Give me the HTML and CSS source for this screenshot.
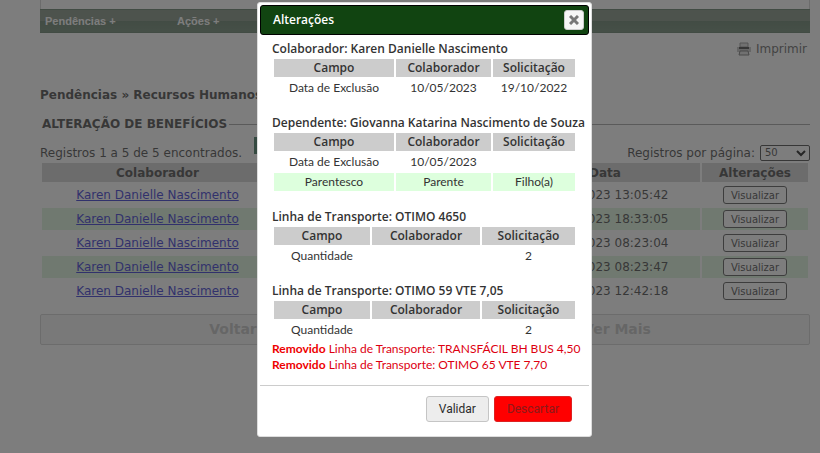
FILE: index.html
```
<!DOCTYPE html>
<html lang="pt-br">
<head>
    <meta charset="UTF-8">
    <title>Pendências - Recursos Humanos</title>
    <link rel="stylesheet" href="styles.css">
</head>
<body>
    <div class="page">
        <div class="header"></div>
        <nav class="menu">
            <a href="#">Pendências +</a>
            <a href="#">Ações +</a>
        </nav>

        <div class="tools">
            <a href="#" class="print">
                <svg width="16" height="14" viewBox="0 0 16 14">
                    <path d="M4 1h8v4H4z" fill="#ddd" stroke="#888"/>
                    <path d="M1 5h14v5H1z" fill="#bbb"/>
                    <path d="M3 5h10v2H3z" fill="#333"/>
                    <path d="M4 9h8l1 4H3z" fill="#ddd" stroke="#666"/>
                </svg>
                Imprimir
            </a>
        </div>

        <h1>Pendências » Recursos Humanos</h1>

        <h2><span>ALTERAÇÃO DE BENEFÍCIOS</span></h2>

        <div class="pager">
            <span>Registros 1 a 5 de 5 encontrados.</span>
            <span class="page-mark"></span>
            <label for="perPage">Registros por página:</label>
            <div class="select-box">
                <select id="perPage">
                    <option>50</option>
                </select>
                <svg width="10" height="7" viewBox="0 0 10 7">
                    <path d="M1 1l4 4 4-4" fill="none" stroke="#000" stroke-width="2"/>
                </svg>
            </div>
        </div>

        <table class="records">
            <thead>
                <tr>
                    <th class="col-name">Colaborador</th>
                    <th></th>
                    <th class="col-date">Data</th>
                    <th class="col-action">Alterações</th>
                </tr>
            </thead>
            <tbody>
                <tr>
                    <td><a href="#">Karen Danielle Nascimento</a></td>
                    <td></td>
                    <td>10/05/2023 13:05:42</td>
                    <td><button type="button">Visualizar</button></td>
                </tr>
                <tr>
                    <td><a href="#">Karen Danielle Nascimento</a></td>
                    <td></td>
                    <td>10/05/2023 18:33:05</td>
                    <td><button type="button">Visualizar</button></td>
                </tr>
                <tr>
                    <td><a href="#">Karen Danielle Nascimento</a></td>
                    <td></td>
                    <td>10/05/2023 08:23:04</td>
                    <td><button type="button">Visualizar</button></td>
                </tr>
                <tr>
                    <td><a href="#">Karen Danielle Nascimento</a></td>
                    <td></td>
                    <td>10/05/2023 08:23:47</td>
                    <td><button type="button">Visualizar</button></td>
                </tr>
                <tr>
                    <td><a href="#">Karen Danielle Nascimento</a></td>
                    <td></td>
                    <td>10/05/2023 12:42:18</td>
                    <td><button type="button">Visualizar</button></td>
                </tr>
            </tbody>
        </table>

        <div class="actions">
            <a href="#">Voltar</a>
            <a href="#">Ver Mais</a>
        </div>
    </div>

    <div class="overlay">
        <div class="dialog" role="dialog" aria-labelledby="dialogTitle">
            <div class="dialog-title">
                <span id="dialogTitle">Alterações</span>
                <button type="button" class="close" aria-label="Fechar">
                    <svg width="10" height="10" viewBox="0 0 10 10">
                        <path d="M1 1l8 8M9 1l-8 8" stroke="#777" stroke-width="3"/>
                    </svg>
                </button>
            </div>

            <div class="dialog-content">
                <h3>Colaborador: Karen Danielle Nascimento</h3>
                <table class="changes">
                    <tr><th>Campo</th><th>Colaborador</th><th>Solicitação</th></tr>
                    <tr><td>Data de Exclusão</td><td>10/05/2023</td><td>19/10/2022</td></tr>
                </table>

                <h3>Dependente: Giovanna Katarina Nascimento de Souza</h3>
                <table class="changes">
                    <tr><th>Campo</th><th>Colaborador</th><th>Solicitação</th></tr>
                    <tr><td>Data de Exclusão</td><td>10/05/2023</td><td></td></tr>
                    <tr class="odd"><td>Parentesco</td><td>Parente</td><td>Filho(a)</td></tr>
                </table>

                <h3>Linha de Transporte: OTIMO 4650</h3>
                <table class="changes transport">
                    <tr><th>Campo</th><th>Colaborador</th><th>Solicitação</th></tr>
                    <tr><td>Quantidade</td><td></td><td>2</td></tr>
                </table>

                <h3>Linha de Transporte: OTIMO 59 VTE 7,05</h3>
                <table class="changes transport">
                    <tr><th>Campo</th><th>Colaborador</th><th>Solicitação</th></tr>
                    <tr><td>Quantidade</td><td></td><td>2</td></tr>
                </table>

                <p class="removed"><b>Removido</b> Linha de Transporte: TRANSFÁCIL BH BUS 4,50</p>
                <p class="removed"><b>Removido</b> Linha de Transporte: OTIMO 65 VTE 7,70</p>
            </div>

            <div class="dialog-buttons">
                <button type="button">Validar</button>
                <button type="button" class="discard">Descartar</button>
            </div>
        </div>
    </div>
</body>
</html>
```

FILE: styles.css
```
* {
    box-sizing: border-box;
}

body {
    margin: 0;
    height: 100vh;
    overflow: hidden;
    background-color: #ffffff;
    color: #333333;
    font-family: "DejaVu Sans", Verdana, sans-serif;
    font-size: 12px;
    line-height: 16px;
}

h1, h2, h3, p {
    margin: 0;
    font-size: 12px;
}

.page {
    padding: 0 10px 0 40px;
}

.header {
    height: 9px;
    border: 1px solid #cccccc;
    border-width: 0 1px;
}

.menu {
    display: flex;
    height: 24px;
    background: linear-gradient(#748474 0%, #748474 50%, #54705a 50%, #5e7a62 100%);
    border-top: 1px solid #54705a;
    border-bottom: 1px solid #54705a;
}

.menu a {
    width: 132px;
    padding: 0 5px;
    color: #ffffff;
    font-family: "Liberation Sans", Arial, sans-serif;
    font-size: 11px;
    font-weight: bold;
    line-height: 22px;
    text-decoration: none;
}

.tools {
    display: flex;
    justify-content: flex-end;
    padding: 8px 3px 0;
}

.print {
    display: flex;
    align-items: center;
    gap: 4px;
    color: #555555;
    text-decoration: none;
}

h1 {
    margin-top: 30px;
}

h2 {
    display: flex;
    align-items: center;
    gap: 2px;
    margin-top: 13px;
    padding-left: 2px;
}

h2::after {
    content: "";
    flex: 1;
    height: 1px;
    background-color: #999999;
}

.pager {
    display: flex;
    align-items: center;
    height: 17px;
    margin-top: 12px;
}

.page-mark {
    align-self: flex-start;
    width: 20px;
    height: 17px;
    margin: -7px auto 0 12px;
    background-color: #2e6b50;
}

.select-box {
    position: relative;
    width: 50px;
    margin-left: 5px;
}

.select-box select {
    display: block;
    width: 100%;
    height: 16px;
    padding: 0 4px;
    appearance: none;
    background-color: #ffffff;
    border: 1px solid #333333;
    border-radius: 2px;
    color: #333333;
    font-family: inherit;
    font-size: 10px;
}

.select-box svg {
    position: absolute;
    top: 5px;
    right: 4px;
}

.records {
    width: 100%;
    table-layout: fixed;
    border-spacing: 2px;
    text-align: center;
}

.records th {
    height: 19px;
    padding: 0;
    background-color: #cccccc;
}

.records td {
    height: 22px;
    padding: 0;
}

.records tbody tr:nth-child(even) td {
    background-color: #d8f2d8;
}

.records a {
    color: #2222cc;
}

.col-name {
    width: 231px;
}

.col-date {
    width: 190px;
}

.col-action {
    width: 106px;
}

.records button {
    display: block;
    width: 64px;
    height: 18px;
    margin: 0 auto;
    padding: 0;
    background-color: #ffffff;
    border: 1px solid #444444;
    border-radius: 3px;
    color: #333333;
    font-family: inherit;
    font-size: 10px;
}

.actions {
    display: flex;
    margin-top: 10px;
    border: 1px solid #cccccc;
    background-color: #f4f4f4;
    border-radius: 2px;
}

.actions a {
    flex: 1;
    color: #bbbbbb;
    font-size: 14px;
    font-weight: bold;
    line-height: 29px;
    text-align: center;
    text-decoration: none;
}

.overlay {
    position: fixed;
    inset: 0;
    display: flex;
    align-items: flex-start;
    justify-content: center;
    padding: 2px 11px 0 40px;
    background-color: rgba(58, 58, 58, 0.66);
}

.dialog {
    width: 335px;
    padding: 2px;
    background-color: #ffffff;
    border: 1px solid #dddddd;
    border-radius: 3px;
    color: #333333;
    font-family: Lato, "Segoe UI", sans-serif;
}

.dialog-title, .dialog h3, .changes th {
    font-family: "Open Sans", "Segoe UI", sans-serif;
    font-weight: 600;
}

.dialog-title {
    display: flex;
    align-items: center;
    justify-content: space-between;
    height: 30px;
    padding: 0 4px 0 12px;
    background-color: #114411;
    border: 1px solid #000000;
    border-radius: 3px;
    color: #ffffff;
}

.close {
    display: flex;
    align-items: center;
    justify-content: center;
    width: 20px;
    height: 20px;
    padding: 0;
    background-color: #f6f6f6;
    border: 1px solid #cccccc;
    border-radius: 3px;
}

.dialog-content {
    padding: 6px 12px 12px;
}

.dialog-content h3 {
    white-space: nowrap;
}

.changes {
    width: 100%;
    margin-bottom: 16px;
    table-layout: fixed;
    border-spacing: 2px;
    text-align: center;
}

.changes th, .changes td {
    height: 18px;
    padding: 0;
}

.changes th {
    background-color: #cccccc;
}

.changes th:nth-child(1) {
    width: 120px;
}

.changes th:nth-child(2) {
    width: 95px;
}

.transport th:nth-child(1) {
    width: 96px;
}

.transport th:nth-child(2) {
    width: 108px;
}

.changes .odd td {
    background-color: #ddffdd;
}

.changes:last-of-type {
    margin-bottom: 0;
}

.removed {
    color: #dd0011;
    white-space: nowrap;
}

.removed b {
    color: #ee0000;
}

.dialog-buttons {
    display: flex;
    justify-content: flex-end;
    gap: 5px;
    padding: 10px 17px 12px;
    border-top: 1px solid #cccccc;
}

.dialog-buttons button {
    height: 26px;
    padding: 0 12px;
    background-color: #ededed;
    border: 1px solid #c5c5c5;
    border-radius: 3px;
    color: #2b2b2b;
    font-family: Roboto, Arial, sans-serif;
    font-size: 12px;
}

.dialog-buttons .discard {
    background-color: #ff0000;
    border-color: #dd2222;
    color: #8b1a1a;
}
```
